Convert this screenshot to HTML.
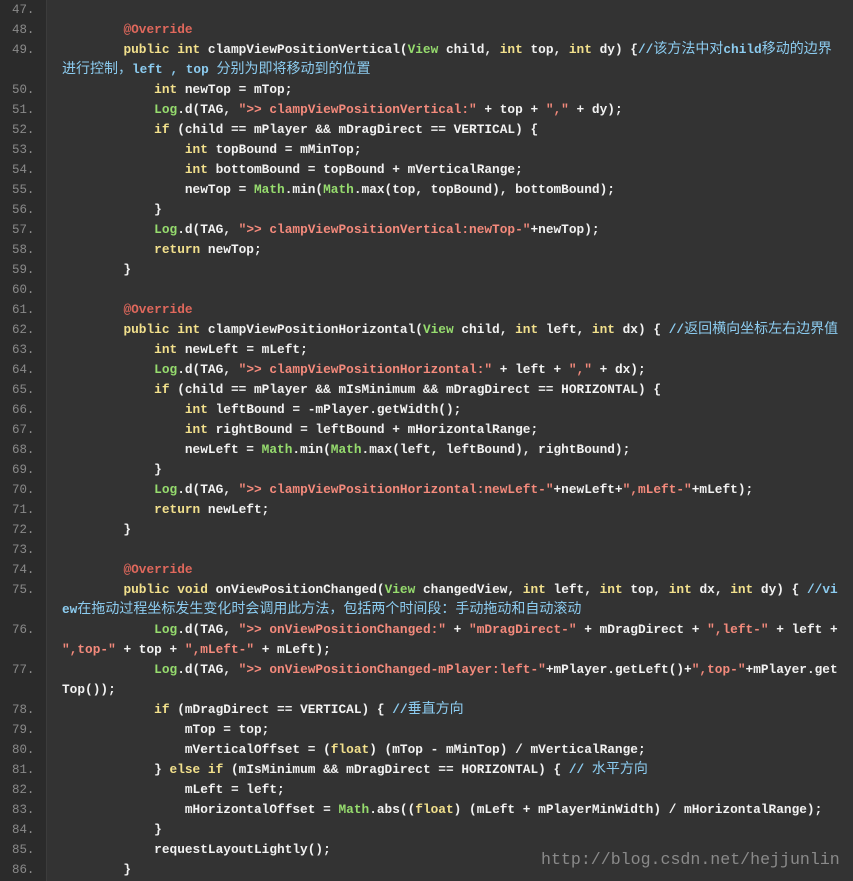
<!DOCTYPE html>
<html><head><meta charset="utf-8"><style>
body{margin:0;width:853px;height:881px;background:#333;overflow:hidden;position:relative;font-family:"Liberation Mono","Noto Sans CJK SC",monospace;}
#gut{position:absolute;left:0;top:0;width:46px;height:881px;background:#2b2b2b;border-right:1px solid #3c3c3c;}
.r{position:absolute;left:0;height:20px;line-height:20px;font-size:12.8px;white-space:pre;color:#f2f2f2;width:853px;}
.t{font-weight:bold;}
.n{position:absolute;left:12px;color:#8a8a8a;font-size:12.45px;}
.t{position:absolute;left:62px;}
.k{color:#f2e08c}.a{color:#e0685c}.s{color:#f48a7c}.c{color:#8cccf0}.g{color:#96dc6e}
.z{font-size:14px;letter-spacing:0;font-weight:normal;}
.wm{position:absolute;left:541px;top:850px;font-family:"Liberation Mono",monospace;font-size:16.6px;color:#8a8a8a;}
</style></head><body>
<div id="gut"></div>
<div class="r" style="top:0"><span class="n">47.</span></div>
<div class="r" style="top:20px"><span class="n">48.</span><span class="t">        <span class="a">@Override</span></span></div>
<div class="r" style="top:40px"><span class="n">49.</span><span class="t">        <span class="k">public int</span> clampViewPositionVertical(<span class="g">View</span> child, <span class="k">int</span> top, <span class="k">int</span> dy) {<span class="c">//<span class="z">该方法中对</span>child<span class="z">移动的边界</span></span></span></div>
<div class="r" style="top:60px"><span class="t"><span class="c"><span class="z">进行控制，</span>left , top <span class="z">分别为即将移动到的位置</span></span></span></div>
<div class="r" style="top:80px"><span class="n">50.</span><span class="t">            <span class="k">int</span> newTop = mTop;</span></div>
<div class="r" style="top:100px"><span class="n">51.</span><span class="t">            <span class="g">Log</span>.d(TAG, <span class="s">"&gt;&gt; clampViewPositionVertical:"</span> + top + <span class="s">","</span> + dy);</span></div>
<div class="r" style="top:120px"><span class="n">52.</span><span class="t">            <span class="k">if</span> (child == mPlayer &amp;&amp; mDragDirect == VERTICAL) {</span></div>
<div class="r" style="top:140px"><span class="n">53.</span><span class="t">                <span class="k">int</span> topBound = mMinTop;</span></div>
<div class="r" style="top:160px"><span class="n">54.</span><span class="t">                <span class="k">int</span> bottomBound = topBound + mVerticalRange;</span></div>
<div class="r" style="top:180px"><span class="n">55.</span><span class="t">                newTop = <span class="g">Math</span>.min(<span class="g">Math</span>.max(top, topBound), bottomBound);</span></div>
<div class="r" style="top:200px"><span class="n">56.</span><span class="t">            }</span></div>
<div class="r" style="top:220px"><span class="n">57.</span><span class="t">            <span class="g">Log</span>.d(TAG, <span class="s">"&gt;&gt; clampViewPositionVertical:newTop-"</span>+newTop);</span></div>
<div class="r" style="top:240px"><span class="n">58.</span><span class="t">            <span class="k">return</span> newTop;</span></div>
<div class="r" style="top:260px"><span class="n">59.</span><span class="t">        }</span></div>
<div class="r" style="top:280px"><span class="n">60.</span></div>
<div class="r" style="top:300px"><span class="n">61.</span><span class="t">        <span class="a">@Override</span></span></div>
<div class="r" style="top:320px"><span class="n">62.</span><span class="t">        <span class="k">public int</span> clampViewPositionHorizontal(<span class="g">View</span> child, <span class="k">int</span> left, <span class="k">int</span> dx) { <span class="c">//<span class="z">返回横向坐标左右边界值</span></span></span></div>
<div class="r" style="top:340px"><span class="n">63.</span><span class="t">            <span class="k">int</span> newLeft = mLeft;</span></div>
<div class="r" style="top:360px"><span class="n">64.</span><span class="t">            <span class="g">Log</span>.d(TAG, <span class="s">"&gt;&gt; clampViewPositionHorizontal:"</span> + left + <span class="s">","</span> + dx);</span></div>
<div class="r" style="top:380px"><span class="n">65.</span><span class="t">            <span class="k">if</span> (child == mPlayer &amp;&amp; mIsMinimum &amp;&amp; mDragDirect == HORIZONTAL) {</span></div>
<div class="r" style="top:400px"><span class="n">66.</span><span class="t">                <span class="k">int</span> leftBound = -mPlayer.getWidth();</span></div>
<div class="r" style="top:420px"><span class="n">67.</span><span class="t">                <span class="k">int</span> rightBound = leftBound + mHorizontalRange;</span></div>
<div class="r" style="top:440px"><span class="n">68.</span><span class="t">                newLeft = <span class="g">Math</span>.min(<span class="g">Math</span>.max(left, leftBound), rightBound);</span></div>
<div class="r" style="top:460px"><span class="n">69.</span><span class="t">            }</span></div>
<div class="r" style="top:480px"><span class="n">70.</span><span class="t">            <span class="g">Log</span>.d(TAG, <span class="s">"&gt;&gt; clampViewPositionHorizontal:newLeft-"</span>+newLeft+<span class="s">",mLeft-"</span>+mLeft);</span></div>
<div class="r" style="top:500px"><span class="n">71.</span><span class="t">            <span class="k">return</span> newLeft;</span></div>
<div class="r" style="top:520px"><span class="n">72.</span><span class="t">        }</span></div>
<div class="r" style="top:540px"><span class="n">73.</span></div>
<div class="r" style="top:560px"><span class="n">74.</span><span class="t">        <span class="a">@Override</span></span></div>
<div class="r" style="top:580px"><span class="n">75.</span><span class="t">        <span class="k">public void</span> onViewPositionChanged(<span class="g">View</span> changedView, <span class="k">int</span> left, <span class="k">int</span> top, <span class="k">int</span> dx, <span class="k">int</span> dy) { <span class="c">//vi</span></span></div>
<div class="r" style="top:600px"><span class="t"><span class="c">ew<span class="z">在拖动过程坐标发生变化时会调用此方法，包括两个时间段：手动拖动和自动滚动</span></span></span></div>
<div class="r" style="top:620px"><span class="n">76.</span><span class="t">            <span class="g">Log</span>.d(TAG, <span class="s">"&gt;&gt; onViewPositionChanged:"</span> + <span class="s">"mDragDirect-"</span> + mDragDirect + <span class="s">",left-"</span> + left +</span></div>
<div class="r" style="top:640px"><span class="t"><span class="s">",top-"</span> + top + <span class="s">",mLeft-"</span> + mLeft);</span></div>
<div class="r" style="top:660px"><span class="n">77.</span><span class="t">            <span class="g">Log</span>.d(TAG, <span class="s">"&gt;&gt; onViewPositionChanged-mPlayer:left-"</span>+mPlayer.getLeft()+<span class="s">",top-"</span>+mPlayer.get</span></div>
<div class="r" style="top:680px"><span class="t">Top());</span></div>
<div class="r" style="top:700px"><span class="n">78.</span><span class="t">            <span class="k">if</span> (mDragDirect == VERTICAL) { <span class="c">//<span class="z">垂直方向</span></span></span></div>
<div class="r" style="top:720px"><span class="n">79.</span><span class="t">                mTop = top;</span></div>
<div class="r" style="top:740px"><span class="n">80.</span><span class="t">                mVerticalOffset = (<span class="k">float</span>) (mTop - mMinTop) / mVerticalRange;</span></div>
<div class="r" style="top:760px"><span class="n">81.</span><span class="t">            } <span class="k">else if</span> (mIsMinimum &amp;&amp; mDragDirect == HORIZONTAL) { <span class="c">// <span class="z">水平方向</span></span></span></div>
<div class="r" style="top:780px"><span class="n">82.</span><span class="t">                mLeft = left;</span></div>
<div class="r" style="top:800px"><span class="n">83.</span><span class="t">                mHorizontalOffset = <span class="g">Math</span>.abs((<span class="k">float</span>) (mLeft + mPlayerMinWidth) / mHorizontalRange);</span></div>
<div class="r" style="top:820px"><span class="n">84.</span><span class="t">            }</span></div>
<div class="r" style="top:840px"><span class="n">85.</span><span class="t">            requestLayoutLightly();</span></div>
<div class="r" style="top:860px"><span class="n">86.</span><span class="t">        }</span></div>
<div class="wm">http://blog.csdn.net/hejjunlin</div>
</body></html>
